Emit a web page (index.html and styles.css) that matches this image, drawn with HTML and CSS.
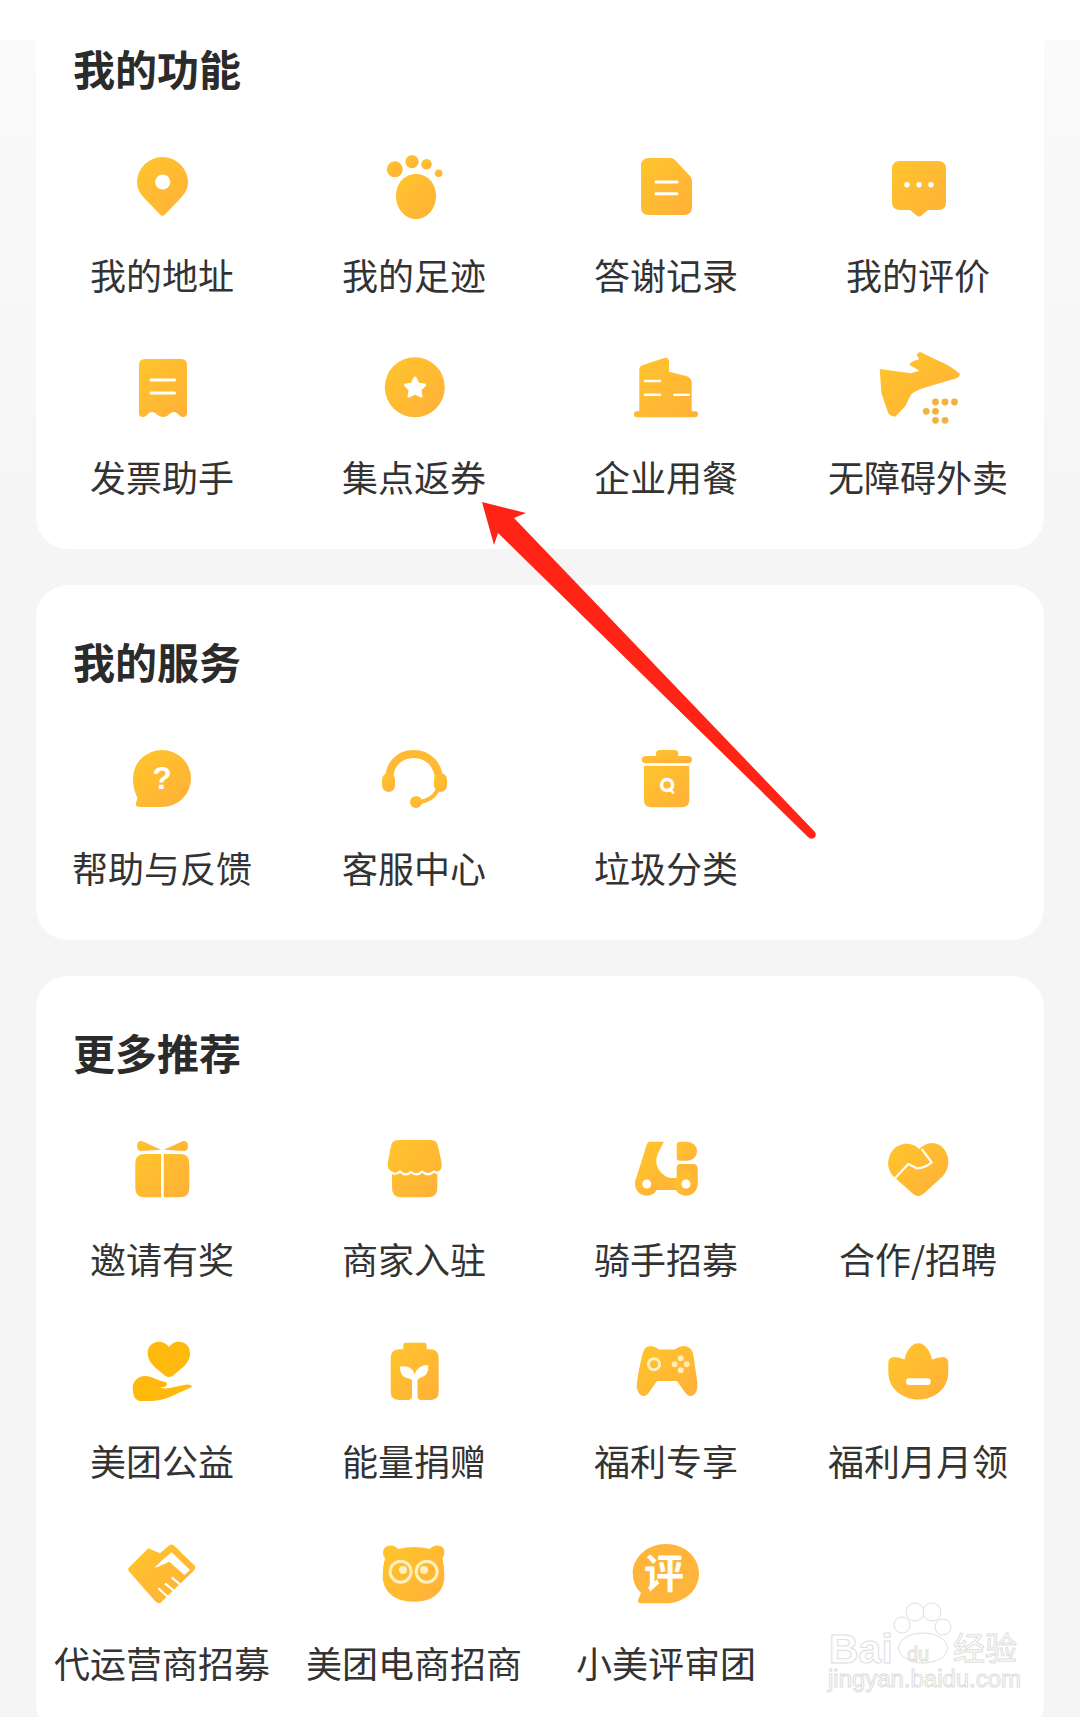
FILE: index.html
```html
<!DOCTYPE html>
<html>
<head>
	<meta charset="utf-8">
	<title>我的功能</title>
	<link rel="stylesheet" href="styles.css">
</head>

<body>

	<!-- shared icon gradient -->
	<svg class="defs" width="0" height="0">
		<defs>
			<linearGradient id="g" x1="0" y1="0" x2="1" y2="1">
				<stop offset="0" stop-color="#ffc52c"/>
				<stop offset="1" stop-color="#ffb038"/>
			</linearGradient>
		</defs>
	</svg>

	<div class="page">

		<section class="card">
			<h2 class="title">我的功能</h2>
			<div class="grid">
				<div class="item">
					<svg class="icon" viewBox="0 0 80 80"><path class="fill" d="M40.5 11A25.5 25.5 0 0 1 66 36.5C66 46 58 53 52 59L43 68.5Q40.5 71 38 68.5L29 59C23 53 15 46 15 36.5A25.5 25.5 0 0 1 40.5 11Z"/><circle class="cut" cx="40.7" cy="36" r="7.6"/></svg>
					<span class="label">我的地址</span>
				</div>
				<div class="item">
					<svg class="icon" viewBox="0 0 80 80"><path class="fill" d="M42 28C54 28 62 38 62 50C62 63 53 73 42 73C31 73 22 63 22 50C22 38 30 28 42 28Z"/><circle class="fill" cx="20.8" cy="23.3" r="8"/><circle class="fill" cx="38" cy="15.7" r="6.6"/><circle class="fill" cx="52.5" cy="18.3" r="5.3"/><circle class="fill" cx="64.6" cy="27.3" r="3.8"/></svg>
					<span class="label">我的足迹</span>
				</div>
				<div class="item">
					<svg class="icon" viewBox="0 0 80 80"><path class="fill" d="M23 12H44Q47 12 49 14L64 30Q66 32 66 35V61Q66 69 58 69H23Q15 69 15 61V20Q15 12 23 12Z"/><path class="line" d="M30 36H51M30 47.7H51"/></svg>
					<span class="label">答谢记录</span>
				</div>
				<div class="item">
					<svg class="icon" viewBox="0 0 80 80"><path class="fill" d="M22 15H60Q68 15 68 23V56Q68 64 60 64H50L44 69Q41 72 38 69L32 64H22Q14 64 14 56V23Q14 15 22 15Z"/><circle class="cut" cx="29" cy="38.7" r="2.7"/><circle class="cut" cx="41" cy="38.7" r="2.7"/><circle class="cut" cx="53" cy="38.7" r="2.7"/></svg>
					<span class="label">我的评价</span>
				</div>
				<div class="item">
					<svg class="icon" viewBox="0 0 80 80"><path class="fill" d="M23 11H59Q65 11 65 17V65Q65 69 61 69C57 69 56 64 52 64C48 64 46 69 41 69C36 69 34 64 30 64C26 64 25 69 21 69Q17 69 17 65V17Q17 11 23 11Z"/><path class="line" d="M29 32H52.5M29 45H52.5"/></svg>
					<span class="label">发票助手</span>
				</div>
				<div class="item">
					<svg class="icon" viewBox="0 0 80 80"><circle class="fill" cx="40.8" cy="39.3" r="30"/><path class="star" d="M41 30L44 36.2L50.5 37.1L45.8 41.6L47 48L41 45L35 48L36.2 41.6L31.5 37.1L38 36.2Z"/></svg>
					<span class="label">集点返券</span>
				</div>
				<div class="item">
					<svg class="icon" viewBox="0 0 80 80"><path class="fill" d="M13.3 22Q13.3 18 17 17L38 10Q43 8.500 43 14V23.700L60 28Q65.700 29.500 65.700 35V63.300H70Q72 63.300 72 66.300Q72 69.300 69 69.300H11Q8 69.300 8 66.300Q8 63.300 10 63.300H13.300Z"/><path class="line thin" d="M19 33H34M19 46.700H34M48.500 46.700H63"/></svg>
					<span class="label">企业用餐</span>
				</div>
				<div class="item">
					<svg class="icon" viewBox="0 0 80 80"><path class="fill" d="M1.700 21L32.700 25.300L41.300 22.700L31.700 17Q31 14 41.300 11.300L38.600 7Q40 3.500 43 4.300L58.600 12Q72 17 82 26Q82 30 72.300 32L48.200 39.300Q38 42 32.700 47L27.500 58L17.200 68.700Q13 68.500 10.300 65.300L3.400 45.300Z"/><g class="dots"><circle cx="57.500" cy="54" r="3.400"/><circle cx="67" cy="54" r="3.400"/><circle cx="76.500" cy="54" r="3.400"/><circle cx="48.200" cy="63.300" r="3.400"/><circle cx="57.500" cy="63.300" r="3.400"/><circle cx="57.500" cy="72.300" r="3.400"/><circle cx="67" cy="72.300" r="3.400"/></g></svg>
					<span class="label">无障碍外卖</span>
				</div>
			</div>
		</section>

		<section class="card">
			<h2 class="title">我的服务</h2>
			<div class="grid">
				<div class="item">
					<svg class="icon" viewBox="0 0 80 80"><path class="fill" d="M40 11A29 28.500 0 0 1 40 68H18Q13 68 14 64L15.500 59Q11 50 11 39.500A29 28.500 0 0 1 40 11Z"/><text class="mark" x="40" y="50" text-anchor="middle">?</text></svg>
					<span class="label">帮助与反馈</span>
				</div>
				<div class="item">
					<svg class="icon" viewBox="0 0 80 80"><path class="arc" d="M15.500 46C13 26 25 15 39.500 15C54 15 67 26 64.500 46"/><rect class="fill" x="8" y="34" width="13" height="19" rx="6.500"/><rect class="fill" x="60" y="34" width="13" height="19" rx="6.500"/><path class="arc thin" d="M63 52C60 58 53 62 44 63.500"/><circle class="fill" cx="42" cy="63" r="6"/></svg>
					<span class="label">客服中心</span>
				</div>
				<div class="item">
					<svg class="icon" viewBox="0 0 80 80"><path class="fill" d="M30 17V15Q30 11 34 11H48Q52.300 11 52.300 15V17H62Q66 17 66 20.600Q66 24.300 62 24.300H19.700Q15.700 24.300 15.700 20.600Q15.700 17 19.700 17Z"/><path class="fill" d="M18 26.700H63.300V61Q63.300 68.300 56 68.300H25Q18 68.300 18 61Z"/><circle class="ring" cx="41" cy="46" r="5.500"/><path class="line thin" d="M44 50L47 53.500"/></svg>
					<span class="label">垃圾分类</span>
				</div>
			</div>
		</section>

		<section class="card">
			<h2 class="title">更多推荐</h2>
			<div class="grid">
				<div class="item">
					<svg class="icon" viewBox="0 0 80 80"><path class="fill" d="M23 24H39V67.300H23Q13.300 67.300 13.300 58V33Q13.300 24 23 24ZM41.700 24H58Q67.300 24 67.300 33V58Q67.300 67.300 58 67.300H41.700Z"/><path class="fill" d="M39 19.700L18 21Q15 20 15 16Q15 10.500 20 11ZM41.700 19.700L63 21Q66 20 66 16Q66 10.500 61 11Z"/></svg>
					<span class="label">邀请有奖</span>
				</div>
				<div class="item">
					<svg class="icon" viewBox="0 0 80 80"><path class="fill" d="M24 10H57Q63 10 64 16L67.700 33Q68.500 42 61 42H63.300V58Q63.300 67.300 54 67.300H27Q18 67.300 18 58V42H20Q13 42 13.700 33L17 16Q18 10 24 10Z"/><path class="crack" d="M13 39Q20 47 26 41.500Q32 47 37 42Q43 47 48 41.500Q54 47 60 41.500Q64 45 68 40"/></svg>
					<span class="label">商家入驻</span>
				</div>
				<div class="item">
					<svg class="icon" viewBox="0 0 80 80"><path class="fill" d="M50.700 15Q50.700 11.700 54 11.700H61A10 9.500 0 0 1 61 30.700H54Q50.700 30.700 50.700 27.500Z"/><path class="fill" d="M24 11.700H38L32 23Q28 33 33 40Q38 47 45 48H50.700V38Q50.700 34 54 34H67Q71.700 34 71.700 39V54L60 60H21L9 52L20 17Q21 11.700 24 11.700Z"/><circle class="fill" cx="20.700" cy="54" r="11.700"/><circle class="fill" cx="60" cy="54" r="11.700"/><circle class="cut" cx="20.700" cy="54" r="4.500"/><circle class="cut" cx="60" cy="54" r="4.500"/></svg>
					<span class="label">骑手招募</span>
				</div>
				<div class="item">
					<svg class="icon" viewBox="0 0 80 80"><path class="fill" d="M40.300 66.300Q37.500 66.300 34 63L15 46C8 38 9 27 15 20C21 13 33 11 41 19C49 11 60 11 66 19C72 27 72 38 65 46L46.500 63Q43 66.300 40.300 66.300Z"/><path class="crack" d="M17 48.300L30.300 34L38.700 38.300Q47 38 53.700 32.300L43.700 19"/></svg>
					<span class="label">合作/招聘</span>
				</div>
				<div class="item">
					<svg class="icon" viewBox="0 0 80 80"><path class="solid" d="M47 45.300Q44 45.300 41 42C34 36 26 31 25.700 21.500C25.700 13 32 9.700 36.500 9.700Q43 9.700 47 15Q51 9.700 57 9.700C62 9.700 68 13 68 21.500C68 31 60 36 53 42Q50 45.300 47 45.300Z"/><path class="solid" d="M10.700 56C10.700 49 16 44 23 44C30 44 36 49 42 49.500Q46 50.500 44.500 53.500Q42.500 56 37 55.500Q45 57.500 52 55L65 52.500Q70.500 52.500 69.700 55L48 65Q38 69 28 69H17Q10.700 67 10.700 56Z"/></svg>
					<span class="label">美团公益</span>
				</div>
				<div class="item">
					<svg class="icon" viewBox="0 0 80 80"><path class="fill" d="M32 10.700H50Q52.700 10.700 52.700 14V17.300H56Q64.700 17.300 64.700 26V60Q64.700 68 56 68H47Q43.500 68 43.500 64V48.500Q43.500 46.500 46 46Q55 44 54.300 33C46 33 41.500 38 40.700 43C40 38 35 33 26 34.700C26 44 31 46 35.500 46.500Q38 47 38 49V64Q38 68 34 68H25.500Q16.700 68 16.700 60V26Q16.700 17.300 25.500 17.300H29.300V14Q29.300 10.700 32 10.700Z"/></svg>
					<span class="label">能量捐赠</span>
				</div>
				<div class="item">
					<svg class="icon" viewBox="0 0 80 80"><path class="fill" d="M24 14Q29 14 33 17.500H49Q53 14 58 14Q66 14 67.500 24L71.300 50C72 59 69 64 64.500 64Q61 64 58 59L51 49H31L24 59Q21 64 17.500 64Q13 64 10.700 56C11 45 14 33 16 24Q18 14 24 14Z"/><circle class="pale-ring" cx="28" cy="32.300" r="5.500"/><g class="pale"><circle cx="54.700" cy="26.300" r="3"/><circle cx="48.700" cy="32.300" r="3"/><circle cx="60.700" cy="32.300" r="3"/><circle cx="54.700" cy="38.300" r="3"/></g></svg>
					<span class="label">福利专享</span>
				</div>
				<div class="item">
					<svg class="icon" viewBox="0 0 80 80"><path class="fill" d="M40.300 11.300C47 11.300 52 19 54 27.500Q60 25 65 25Q70.300 25.500 70.300 31V40C70.300 57 56 67.500 40.300 67.500C25 67.500 10.300 57 10.300 40V31Q10.300 25.500 16 25Q21 25 26.500 27.500C28.500 19 33.500 11.300 40.300 11.300Z"/><rect class="cut" x="28" y="46.300" width="24.700" height="6.700" rx="3.300"/></svg>
					<span class="label">福利月月领</span>
				</div>
				<div class="item">
					<svg class="icon" viewBox="0 0 80 80"><path class="fill" d="M6.300 34.300L26.300 14.300L38 19.300L47 11.500Q49.700 9.500 52 11.500L73 32Q74 34.300 72 36.500L38 69.300Q35.500 69.500 33 67L7.500 38Q5.500 36 6.300 34.300Z"/><path class="cut" d="M49.700 18.300L68 36L62.300 41L47.300 27.700L36.300 32.700L32.300 33.700L41.300 25.300Z"/><path class="finger" d="M49.700 43.300L58.700 51M43 49.300L53 57.700M36.300 54.300L46.300 63.300"/></svg>
					<span class="label">代运营商招募</span>
				</div>
				<div class="item">
					<svg class="icon" viewBox="0 0 80 80"><path class="fill" d="M9 19Q9 12 16 11.500Q21 11 24 15Q32 13 40 13Q48 13 56 15Q59 11 64 11.500Q71 12 70.300 19Q70.300 22 68.500 24Q70.300 32 70.300 42C70.300 58 59 67.700 40 67.700C21 67.700 8.700 58 8.700 42Q8.700 32 11 24Q9 22 9 19Z"/><circle class="pale-ring" cx="26.700" cy="37.700" r="10.500"/><circle class="pale-ring" cx="52.700" cy="37.700" r="10.500"/><circle class="pale-dot" cx="29" cy="36" r="4"/><circle class="pale-dot" cx="50" cy="36" r="4"/></svg>
					<span class="label">美团电商招商</span>
				</div>
				<div class="item">
					<svg class="icon" viewBox="0 0 80 80"><path class="flat" d="M40 10C58 10 73 22.500 73 39.500C73 56.500 58 69.300 40 69.300H15Q11 69.300 12.500 65L15 59Q6.700 51 6.700 39.500C6.700 22.500 22 10 40 10Z"/><text class="char" x="38" y="54" text-anchor="middle">评</text></svg>
					<span class="label">小美评审团</span>
				</div>
			</div>
		</section>

	</div>

	<!-- red annotation arrow -->
	<svg class="arrow" viewBox="0 0 1080 1717">
		<path d="M482 502L526 513L514 518L815 832Q817 836 814 838Q811 840 808 837L498 533L494 545Z"/>
	</svg>

	<!-- watermark -->
	<svg class="mark-logo" viewBox="0 0 200 100">
		<circle cx="89" cy="12" r="9"/><circle cx="106" cy="12" r="9"/><circle cx="76" cy="25" r="8"/><circle cx="117" cy="27" r="8"/><ellipse cx="97" cy="48" rx="24.500" ry="15"/>
		<text class="wm-big" x="3" y="63">Bai</text>
		<text class="wm-du" x="92" y="61" text-anchor="middle">du</text>
		<text class="wm-cn" x="127" y="60">经验</text>
		<text class="wm-url" x="2" y="87" textLength="193" lengthAdjust="spacingAndGlyphs">jingyan.baidu.com</text>
	</svg>

</body>
</html>
```

FILE: styles.css
```css
* {
	padding: 0;
	margin: 0;
	box-sizing: border-box;
}
html, body {
	width: 1080px;
	height: 1717px;
	overflow: hidden;
}
body {
	position: relative;
	background: linear-gradient(#fefefe 40px, #fafafa 40px, #f5f5f5 560px);
	font-family: "Noto Sans CJK SC", "Liberation Sans", sans-serif;
}
.defs {
	position: absolute;
}

.page {
	display: flex;
	flex-direction: column;
	gap: 36px;
	margin: -8px 36px 0;
}
.card {
	background-color: #fff;
	border-radius: 32px;
	padding: 46px 0 45px;
}
.title {
	height: 63px;
	padding-left: 37px;
	font-size: 42px;
	line-height: 60px;
	font-weight: 700;
	color: #2b2b2b;
}
.grid {
	display: grid;
	grid-template-columns: repeat(4, 252px);
	row-gap: 46px;
	margin-top: 45px;
}
.item {
	display: flex;
	flex-direction: column;
	align-items: center;
	gap: 23px;
}
.label {
	height: 53px;
	font-size: 36px;
	line-height: 50px;
	color: #333;
	white-space: nowrap;
}

/* icons */
.icon {
	display: block;
	width: 80px;
	height: 80px;
	overflow: visible;
}
.fill {
	fill: url(#g);
}
.flat {
	fill: #ffb53a;
}
.solid {
	fill: #ffb90c;
}
.cut {
	fill: #fff;
}
.dots {
	fill: #f2b23e;
}
.line {
	fill: none;
	stroke: #fff;
	stroke-width: 3;
	stroke-linecap: round;
}
.line.thin {
	stroke-width: 2.6;
}
.star {
	fill: #fff;
	stroke: #fff;
	stroke-width: 3;
	stroke-linejoin: round;
}
.arc {
	fill: none;
	stroke: #ffb933;
	stroke-width: 8;
	stroke-linecap: round;
}
.arc.thin {
	stroke-width: 4;
}
.ring {
	fill: none;
	stroke: #fff;
	stroke-width: 3.5;
}
.crack {
	fill: none;
	stroke: #fff;
	stroke-width: 2.2;
	stroke-linejoin: round;
}
.pale {
	fill: #ffeeb4;
}
.pale-ring {
	fill: none;
	stroke: #fff1bf;
	stroke-width: 3;
}
.pale-dot {
	fill: #fff1bf;
}
.finger {
	fill: none;
	stroke: #fff;
	stroke-width: 2.2;
}
.mark {
	font-family: "Liberation Sans", sans-serif;
	font-size: 32px;
	font-weight: 700;
	fill: #fff;
}
.char {
	font-family: "Noto Sans CJK SC", sans-serif;
	font-size: 40px;
	font-weight: 700;
	fill: #fff;
}

/* things that lie over the page */
.arrow {
	position: absolute;
	left: 0;
	top: 0;
	width: 1080px;
	height: 1717px;
	pointer-events: none;
}
.arrow path {
	fill: #ff2415;
}
.mark-logo {
	position: absolute;
	left: 826px;
	top: 1600px;
	width: 200px;
	height: 100px;
	fill: #fff;
	stroke: #dedede;
	stroke-width: 1;
}
.mark-logo text {
	font-family: "Liberation Sans", "Noto Sans CJK SC", sans-serif;
}
.wm-big {
	font-size: 41px;
	font-weight: 700;
}
.wm-du {
	font-size: 20px;
}
.wm-cn {
	font-size: 32px;
}
.wm-url {
	font-size: 23px;
}
```
